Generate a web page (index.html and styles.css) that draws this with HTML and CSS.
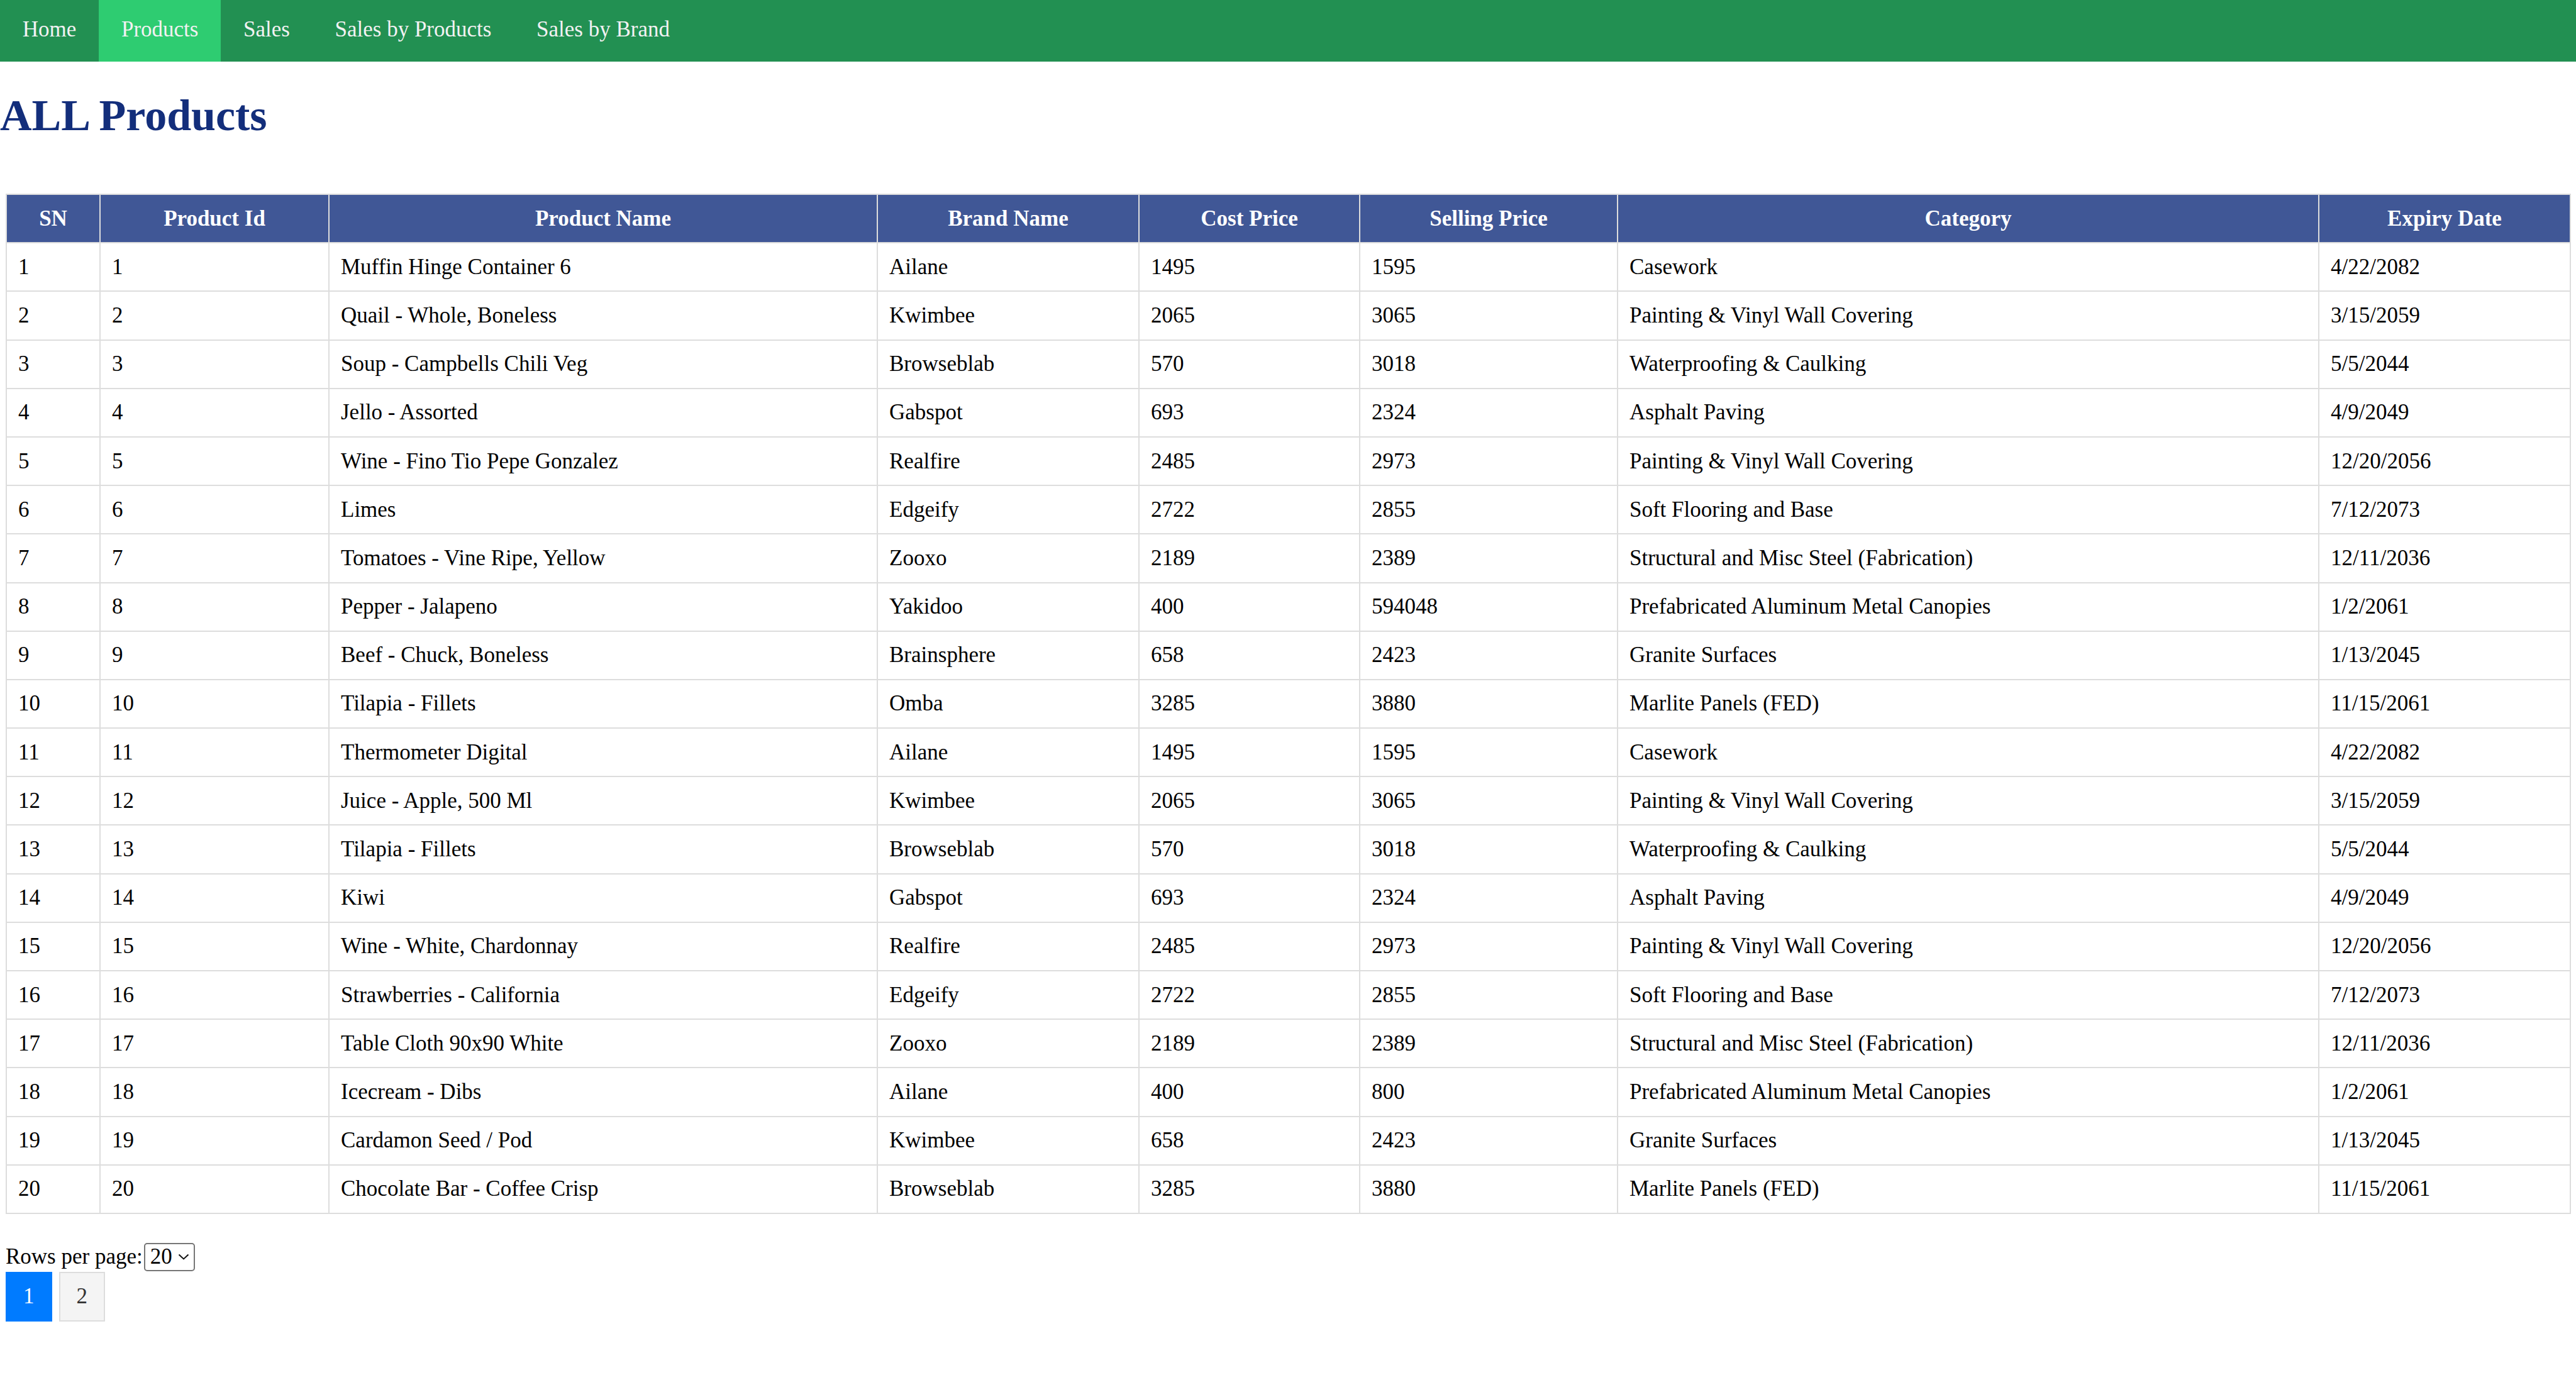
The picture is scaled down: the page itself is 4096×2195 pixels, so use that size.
FILE: index.html
```html
<!DOCTYPE html>
<html lang="en">
<head>
<meta charset="utf-8">
<title>ALL Products</title>
<link rel="stylesheet" href="styles.css">
</head>
<body>
<nav class="topnav">
  <a href="#">Home</a>
  <a href="#" class="active">Products</a>
  <a href="#">Sales</a>
  <a href="#">Sales by Products</a>
  <a href="#">Sales by Brand</a>
</nav>
<h1 class="title">ALL Products</h1>
<main class="content">
  <table class="products">
    <colgroup>
      <col class="c-sn"><col class="c-id"><col class="c-name"><col class="c-brand"><col class="c-cost"><col class="c-sell"><col class="c-cat"><col class="c-exp">
    </colgroup>
    <thead>
      <tr><th>SN</th><th>Product Id</th><th>Product Name</th><th>Brand Name</th><th>Cost Price</th><th>Selling Price</th><th>Category</th><th>Expiry Date</th></tr>
    </thead>
    <tbody>
      <tr><td>1</td><td>1</td><td>Muffin Hinge Container 6</td><td>Ailane</td><td>1495</td><td>1595</td><td>Casework</td><td>4/22/2082</td></tr>
      <tr><td>2</td><td>2</td><td>Quail - Whole, Boneless</td><td>Kwimbee</td><td>2065</td><td>3065</td><td>Painting &amp; Vinyl Wall Covering</td><td>3/15/2059</td></tr>
      <tr><td>3</td><td>3</td><td>Soup - Campbells Chili Veg</td><td>Browseblab</td><td>570</td><td>3018</td><td>Waterproofing &amp; Caulking</td><td>5/5/2044</td></tr>
      <tr><td>4</td><td>4</td><td>Jello - Assorted</td><td>Gabspot</td><td>693</td><td>2324</td><td>Asphalt Paving</td><td>4/9/2049</td></tr>
      <tr><td>5</td><td>5</td><td>Wine - Fino Tio Pepe Gonzalez</td><td>Realfire</td><td>2485</td><td>2973</td><td>Painting &amp; Vinyl Wall Covering</td><td>12/20/2056</td></tr>
      <tr><td>6</td><td>6</td><td>Limes</td><td>Edgeify</td><td>2722</td><td>2855</td><td>Soft Flooring and Base</td><td>7/12/2073</td></tr>
      <tr><td>7</td><td>7</td><td>Tomatoes - Vine Ripe, Yellow</td><td>Zooxo</td><td>2189</td><td>2389</td><td>Structural and Misc Steel (Fabrication)</td><td>12/11/2036</td></tr>
      <tr><td>8</td><td>8</td><td>Pepper - Jalapeno</td><td>Yakidoo</td><td>400</td><td>594048</td><td>Prefabricated Aluminum Metal Canopies</td><td>1/2/2061</td></tr>
      <tr><td>9</td><td>9</td><td>Beef - Chuck, Boneless</td><td>Brainsphere</td><td>658</td><td>2423</td><td>Granite Surfaces</td><td>1/13/2045</td></tr>
      <tr><td>10</td><td>10</td><td>Tilapia - Fillets</td><td>Omba</td><td>3285</td><td>3880</td><td>Marlite Panels (FED)</td><td>11/15/2061</td></tr>
      <tr><td>11</td><td>11</td><td>Thermometer Digital</td><td>Ailane</td><td>1495</td><td>1595</td><td>Casework</td><td>4/22/2082</td></tr>
      <tr><td>12</td><td>12</td><td>Juice - Apple, 500 Ml</td><td>Kwimbee</td><td>2065</td><td>3065</td><td>Painting &amp; Vinyl Wall Covering</td><td>3/15/2059</td></tr>
      <tr><td>13</td><td>13</td><td>Tilapia - Fillets</td><td>Browseblab</td><td>570</td><td>3018</td><td>Waterproofing &amp; Caulking</td><td>5/5/2044</td></tr>
      <tr><td>14</td><td>14</td><td>Kiwi</td><td>Gabspot</td><td>693</td><td>2324</td><td>Asphalt Paving</td><td>4/9/2049</td></tr>
      <tr><td>15</td><td>15</td><td>Wine - White, Chardonnay</td><td>Realfire</td><td>2485</td><td>2973</td><td>Painting &amp; Vinyl Wall Covering</td><td>12/20/2056</td></tr>
      <tr><td>16</td><td>16</td><td>Strawberries - California</td><td>Edgeify</td><td>2722</td><td>2855</td><td>Soft Flooring and Base</td><td>7/12/2073</td></tr>
      <tr><td>17</td><td>17</td><td>Table Cloth 90x90 White</td><td>Zooxo</td><td>2189</td><td>2389</td><td>Structural and Misc Steel (Fabrication)</td><td>12/11/2036</td></tr>
      <tr><td>18</td><td>18</td><td>Icecream - Dibs</td><td>Ailane</td><td>400</td><td>800</td><td>Prefabricated Aluminum Metal Canopies</td><td>1/2/2061</td></tr>
      <tr><td>19</td><td>19</td><td>Cardamon Seed / Pod</td><td>Kwimbee</td><td>658</td><td>2423</td><td>Granite Surfaces</td><td>1/13/2045</td></tr>
      <tr><td>20</td><td>20</td><td>Chocolate Bar - Coffee Crisp</td><td>Browseblab</td><td>3285</td><td>3880</td><td>Marlite Panels (FED)</td><td>11/15/2061</td></tr>
    </tbody>
  </table>

  <div class="rows-per-page">
    <label for="rpp" class="rpp-label">Rows per page:</label>
    <span class="select-wrap">
      <select id="rpp" class="rpp-select">
        <option selected>20</option>
        <option>50</option>
        <option>100</option>
      </select>
      <svg class="chevron" width="18" height="10" viewBox="0 0 18 10" aria-hidden="true"><polyline points="1.5,1.5 9,8.5 16.5,1.5" fill="none" stroke="#111" stroke-width="2"/></svg>
    </span>
  </div>
  <div class="pages">
    <button class="page-btn current">1</button>
    <button class="page-btn">2</button>
  </div>
</main>
</body>
</html>
```
FILE: styles.css
```css
html, body {
  margin: 0;
  padding: 0;
  background: #fff;
}
body {
  font-family: "Liberation Serif", "Times New Roman", serif;
  font-size: 35px;
  color: #000;
}

/* Top navigation */
.topnav {
  display: flex;
  background: #229052;
}
.topnav a {
  display: block;
  color: #f2f2f2;
  text-decoration: none;
  line-height: 40px;
  padding: 27px 35.8px 31px;
}
.topnav a.active {
  background: #2ecc71;
}

/* Heading */
.title {
  margin: 46px 0 0;
  font-size: 70px;
  line-height: 80px;
  font-weight: bold;
  color: #132e7b;
}

.content {
  padding: 84px 9px 0;
}

/* Table */
.products {
  width: 100%;
  border-collapse: collapse;
  table-layout: fixed;
  border: 2px solid #ddd;
}
.c-sn { width: 149px; }
.c-id { width: 364px; }
.c-name { width: 872px; }
.c-brand { width: 416px; }
.c-cost { width: 351px; }
.c-sell { width: 410px; }
.c-cat { width: 1115px; }
.c-exp { width: 400px; }

.products th,
.products td {
  border: 2px solid #ddd;
  padding: 17.6px 18px;
  line-height: 40px;
  white-space: nowrap;
}
.products th {
  background: #405796;
  color: #fff;
  font-weight: bold;
  text-align: center;
}
.products td {
  text-align: left;
  color: #000;
}

/* Rows per page */
.rows-per-page {
  display: flex;
  align-items: center;
  margin-top: 46px;
}
.rpp-label {
  line-height: 40px;
}
.select-wrap {
  position: relative;
  display: inline-flex;
  margin-left: 2px;
}
.rpp-select {
  appearance: none;
  -webkit-appearance: none;
  width: 81px;
  height: 45px;
  box-sizing: border-box;
  border: 2px solid #767676;
  border-radius: 5px;
  background: #fff;
  font-family: inherit;
  font-size: 35px;
  color: #000;
  padding: 0 0 0 8px;
  margin: 0;
  line-height: 40px;
}
.chevron {
  position: absolute;
  left: 54px;
  top: 17px;
  pointer-events: none;
}

/* Pagination */
.pages {
  display: flex;
  gap: 11px;
  margin-top: 1px;
}
.page-btn {
  font-family: inherit;
  font-size: 35px;
  line-height: 40px;
  padding: 17.4px 26px;
  margin: 0;
  border: 2px solid #ddd;
  background: #f4f4f4;
  color: #333;
  border-radius: 0;
  cursor: pointer;
}
.page-btn.current {
  background: #007bff;
  border-color: #007bff;
  color: #fff;
}
```
